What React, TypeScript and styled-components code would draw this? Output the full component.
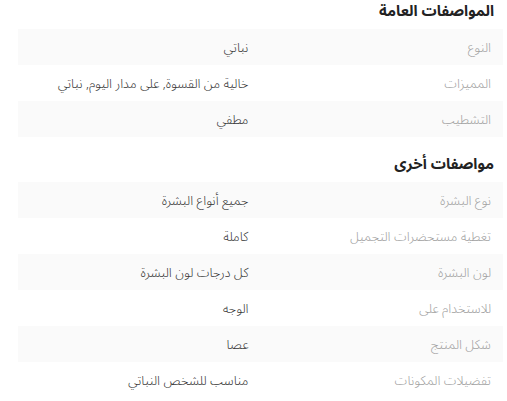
import React from 'react'
import styled, { createGlobalStyle } from 'styled-components'

const GlobalStyle = createGlobalStyle`
  body {
    margin: 0;
    background: #fff;
    font-family: "Noto Sans Arabic", "Noto Sans", "DejaVu Sans", sans-serif;
  }
`

const Wrapper = styled.div`
  direction: rtl;
  padding: 0 4px 0 18px;
`

const Section = styled.section`
  & + & {
    margin-top: 16px;
  }
`

const Heading = styled.h3`
  margin: 0;
  height: 29px;
  padding-top: 1px;
  box-sizing: border-box;
  line-height: 20px;
  padding-right: 9px;
  font-size: 15px;
  font-weight: 700;
  color: #222;
`

const Row = styled.div<{ $shaded: boolean }>`
  display: grid;
  grid-template-columns: 1fr 1fr;
  height: 36px;
  align-items: center;
  padding-top: 1px;
  box-sizing: border-box;
  background: ${(p) => (p.$shaded ? '#fafafa' : '#fff')};
  font-size: 13px;
  font-weight: 300;
`

const Label = styled.span`
  padding-right: 12px;
  color: #a0a0a0;
`

const Value = styled.span`
  padding-right: 12px;
  color: #333;
`

const sections = [
  {
    title: 'المواصفات العامة',
    rows: [
      ['النوع', 'نباتي'],
      ['المميزات', 'خالية من القسوة, على مدار اليوم, نباتي'],
      ['التشطيب', 'مطفي'],
    ],
  },
  {
    title: 'مواصفات أخرى',
    rows: [
      ['نوع البشرة', 'جميع أنواع البشرة'],
      ['تغطية مستحضرات التجميل', 'كاملة'],
      ['لون البشرة', 'كل درجات لون البشرة'],
      ['للاستخدام على', 'الوجه'],
      ['شكل المنتج', 'عصا'],
      ['تفضيلات المكونات', 'مناسب للشخص النباتي'],
    ],
  },
]

const App: React.FC = () => {
  return (
    <Wrapper>
      <GlobalStyle />
      {sections.map((section) => (
        <Section key={section.title}>
          <Heading>{section.title}</Heading>
          {section.rows.map(([label, value], i) => (
            <Row key={label} $shaded={i % 2 === 0}>
              <Label>{label}</Label>
              <Value>{value}</Value>
            </Row>
          ))}
        </Section>
      ))}
    </Wrapper>
  )
}

export default App
